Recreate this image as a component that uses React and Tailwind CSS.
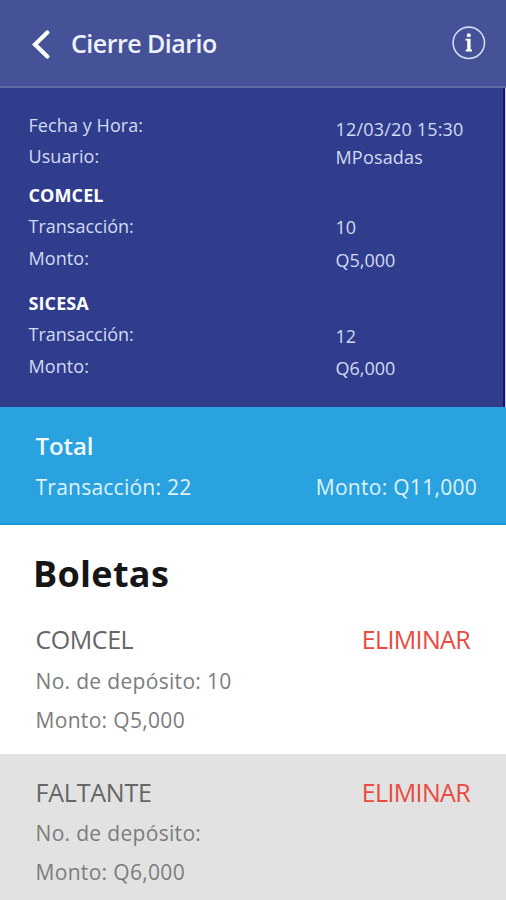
import React from 'react';

const summaryLabels = [
  { text: 'Fecha y Hora:', className: 'tracking-[0.08px]' },
  { text: 'Usuario:', className: 'tracking-[0.08px]' },
  { text: 'COMCEL', className: 'mt-2 font-bold text-white tracking-[0.1px]' },
  { text: 'Transacción:', className: '' },
  { text: 'Monto:', className: 'mt-px tracking-[0.1px]' },
  { text: 'SICESA', className: 'mt-3.5 font-bold text-white tracking-[0.1px]' },
  { text: 'Transacción:', className: '' },
  { text: 'Monto:', className: 'mt-px tracking-[0.1px]' },
];

const summaryValues = [
  { text: '12/03/20 15:30', className: 'tracking-[0.18px]' },
  { text: 'MPosadas', className: 'tracking-[0.18px]' },
  { text: '10', className: 'mt-[42px]' },
  { text: 'Q5,000', className: 'mt-[5px]' },
  { text: '12', className: 'mt-12' },
  { text: 'Q6,000', className: 'mt-1' },
];

const slips = [
  {
    id: 1,
    name: 'COMCEL',
    deposit: '10',
    amount: 'Q5,000',
    className: 'h-[138px] bg-white pt-1.5',
    nameClass: 'tracking-[-0.45px]',
    detailsClass: 'mt-1.5',
  },
  {
    id: 2,
    name: 'FALTANTE',
    deposit: '',
    amount: 'Q6,000',
    className: 'h-[146px] bg-[#e2e2e2] pt-[21px]',
    nameClass: 'tracking-[-0.2px]',
    detailsClass: 'mt-[5px]',
  },
];

const Header = () => (
  <header className="flex h-[88px] items-center border-b-2 border-[#626ba8] bg-[#455298] pr-5 pl-8">
    <button aria-label="Regresar" className="pt-0.5">
      <svg width="19" height="30" viewBox="0 0 19 30" fill="none" className="block">
        <path d="M15.3 3.5L3 15.5L15.3 27.5" stroke="white" strokeWidth="4.2" strokeLinecap="round" />
      </svg>
    </button>
    <h1 className="ml-5 flex-1 text-[25px] leading-[34px] font-semibold tracking-[-0.52px] text-[#eef1ff]">
      Cierre Diario
    </h1>
    <button aria-label="Información">
      <svg width="34" height="34" viewBox="0 0 34 34" fill="none" className="block">
        <circle cx="16.8" cy="16.8" r="15.7" stroke="#cfdbf7" strokeWidth="1.6" />
        <circle cx="16.8" cy="9.2" r="2" fill="white" />
        <path d="M13.5 12.8H18.6V23.6H20V25.6H13.7V23.6H15.2V14.6H13.5Z" fill="white" />
      </svg>
    </button>
  </header>
);

const Summary = () => (
  <section className="flex h-[319px] border-r border-[#c9c8ee] bg-[#303d8c] text-lg text-[#d3dbf4]">
    <div className="w-[335.5px] pt-[22px] pl-[28.5px] leading-[31px]">
      {summaryLabels.map((item, i) => (
        <p key={i} className={item.className}>{item.text}</p>
      ))}
    </div>
    <div className="flex-1 border-r-2 border-[#14147c] pt-[27px] leading-7">
      {summaryValues.map((item, i) => (
        <p key={i} className={item.className}>{item.text}</p>
      ))}
    </div>
  </section>
);

const Total = () => (
  <section className="h-[118px] border-b-2 border-[#1496d8] bg-[#2aa2df] pt-[22px] pr-[29px] pl-[35.5px] text-[#dff3fd]">
    <h2 className="text-2xl leading-[34px] font-semibold tracking-[-0.1px] text-[#f0faff]">Total</h2>
    <div className="mt-2 flex justify-between text-[21px] leading-8">
      <p className="tracking-[0.24px]">Transacción: 22</p>
      <p className="tracking-[0.28px]">Monto: Q11,000</p>
    </div>
  </section>
);

const Slip = ({ slip }) => (
  <article className={`pr-9 pl-[35.5px] text-[#7c7c7c] ${slip.className}`}>
    <div className="flex justify-between text-[25px] leading-[34px]">
      <h3 className={`text-[#666666] ${slip.nameClass}`}>{slip.name}</h3>
      <button className="tracking-[-0.65px] text-[#ea4a40]">ELIMINAR</button>
    </div>
    <div className={`text-[21px] leading-[39px] tracking-[0.32px] ${slip.detailsClass}`}>
      <p>No. de depósito: {slip.deposit}</p>
      <p>Monto: {slip.amount}</p>
    </div>
  </article>
);

export default function App() {
  return (
    <main className="h-[900px] w-[506px] overflow-hidden bg-white font-['Open_Sans','Noto_Sans',sans-serif]">
      <Header />
      <Summary />
      <Total />
      <h2 className="h-[91px] bg-white pt-6 pl-[33px] text-4xl leading-[50px] font-bold tracking-[0.3px] text-[#161616]">
        Boletas
      </h2>
      {slips.map((slip) => (
        <Slip key={slip.id} slip={slip} />
      ))}
    </main>
  );
}
